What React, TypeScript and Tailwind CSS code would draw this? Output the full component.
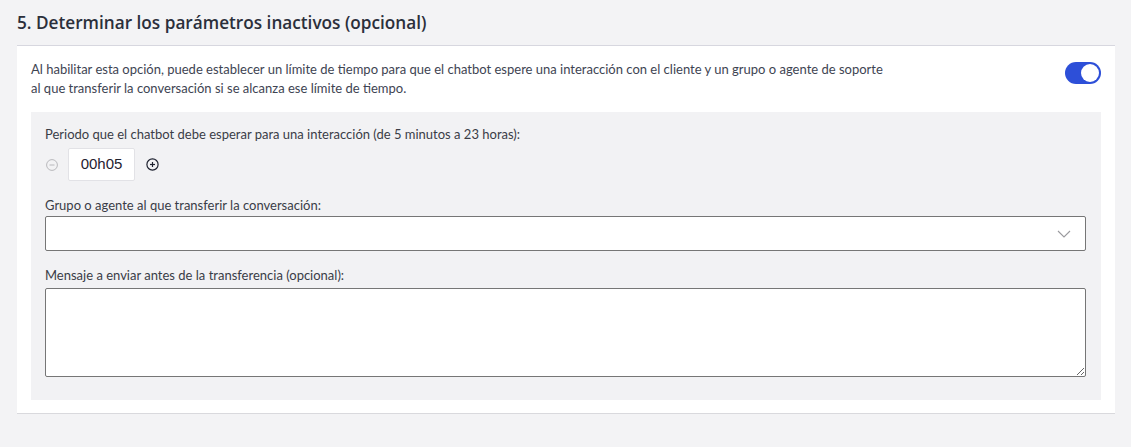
import React from "react";

const Label = ({ children }: { children: React.ReactNode }) => (
  <label className="block text-[13px] leading-[19px] text-[#3a3d47]">{children}</label>
);

export default function App() {
  return (
    <div className="min-h-screen bg-[#f3f3f5] pl-[17px] pr-[16px] font-['Lato',sans-serif]">
      <div className="flex h-[46px] items-center border-b border-[#d7d7df]">
        <h2 className="font-['Open_Sans',sans-serif] text-[17.2px] font-semibold text-[#2b2f3b]">
          5. Determinar los parámetros inactivos (opcional)
        </h2>
      </div>

      <div className="border-b border-[#d9d9dd] bg-white px-[14px] pb-[13px] pt-[14px]">
        <div className="flex items-start justify-between">
          <p className="text-[13px] leading-[19px] text-[#3e4452]">
            Al habilitar esta opción, puede establecer un límite de tiempo para que el chatbot espere una
            interacción con el cliente y un grupo o agente de soporte
            <br />
            al que transferir la conversación si se alcanza ese límite de tiempo.
          </p>
          <button className="mt-[2px] flex h-[22px] w-[36px] shrink-0 items-center justify-end rounded-full bg-[#2d4fd8] px-[2px]">
            <span className="size-[18px] rounded-full bg-white" />
          </button>
        </div>

        <div className="mt-[14px] bg-[#f2f2f4] pb-[23px] pl-[14px] pr-[15px] pt-[13px]">
          <Label>Periodo que el chatbot debe esperar para una interacción (de 5 minutos a 23 horas):</Label>
          <div className="mt-[4px] flex items-center">
            <svg width="12" height="12" viewBox="0 0 12 12" className="ml-[1px]">
              <circle cx="6" cy="6" r="5.4" fill="none" stroke="#b8b8bc" strokeWidth="1" />
              <line x1="3.5" y1="6" x2="8.5" y2="6" stroke="#b8b8bc" strokeWidth="1" />
            </svg>
            <div className="ml-[10px] flex h-[33px] w-[67px] items-center justify-center rounded-[2px] border border-[#e2e2e6] bg-white font-['Liberation_Sans',sans-serif] text-[15px] text-[#1f2230]">
              00h05
            </div>
            <svg width="13" height="13" viewBox="0 0 13 13" className="ml-[11px]">
              <circle cx="6.5" cy="6.5" r="5.6" fill="none" stroke="#1f2230" strokeWidth="1.2" />
              <line x1="4" y1="6.5" x2="9" y2="6.5" stroke="#1f2230" strokeWidth="1.2" />
              <line x1="6.5" y1="4" x2="6.5" y2="9" stroke="#1f2230" strokeWidth="1.2" />
            </svg>
          </div>

          <div className="mt-[15px]">
            <Label>Grupo o agente al que transferir la conversación:</Label>
            <div className="relative mt-[1px] h-[35px] rounded-[2px] border border-[#767676] bg-white">
              <svg width="14" height="8" viewBox="0 0 14 8" className="absolute right-[14px] top-[13px]">
                <polyline points="1,1 7,7 13,1" fill="none" stroke="#9a9a9e" strokeWidth="1.1" />
              </svg>
            </div>
          </div>

          <div className="mt-[15px]">
            <Label>Mensaje a enviar antes de la transferencia (opcional):</Label>
            <textarea className="mt-[3px] block h-[89px] w-full rounded-[2px] border border-[#767676] bg-white" />
          </div>
        </div>
      </div>
    </div>
  );
}
